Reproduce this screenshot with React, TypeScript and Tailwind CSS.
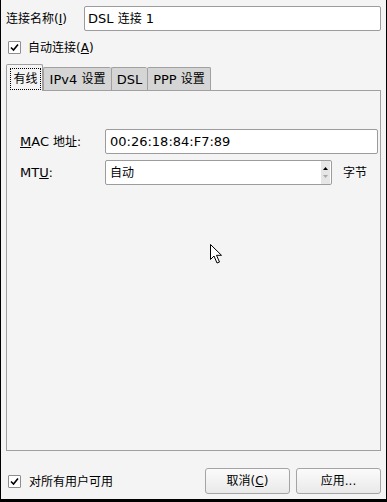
import React from 'react';

// CJK glyphs in the reference are narrower than the Latin em, so set them a touch smaller
const Z: React.FC<{ children: React.ReactNode }> = ({ children }) => (
  <span className="text-[12px]">{children}</span>
);

const Check: React.FC = () => (
  <div className="w-[13px] h-[13px] shrink-0 bg-white border border-[#8e8e8e] rounded-[1px] flex items-center justify-center">
    <svg width="9" height="9" viewBox="0 0 9 9">
      <path d="M1 4.5 L3.5 7 L8 1.5" fill="none" stroke="#000" strokeWidth="1.6" />
    </svg>
  </div>
);

const Tab: React.FC<{ label: React.ReactNode; w: string; last?: boolean }> = ({ label, w, last }) => (
  <div
    className={`${w} h-[23px] bg-[#d5d5d5] border-t border-l border-[#a0a0a0] ${last ? 'border-r' : ''} rounded-t-[2px] flex items-center justify-center whitespace-pre`}
  >
    {label}
  </div>
);

export default function App() {
  return (
    <div className="relative w-[387px] h-[502px] bg-[#f4f4f4] border-l border-r border-b-[3px] border-black flex flex-col text-[13px] leading-none text-black font-['DejaVu_Sans','Noto_Sans_CJK_SC',sans-serif]">
      {/* connection name */}
      <div className="flex items-center pt-[6px] pl-[5px] pr-[5px]">
        <div className="w-[78px] shrink-0">
          <Z>连接名称(<span className="underline">I</span>)</Z>
        </div>
        <div className="flex-1 h-[25px] bg-white border border-[#9c9c9c] rounded-[2px] flex items-center pl-[3px] whitespace-pre">
          DSL <Z>连接</Z> 1
        </div>
      </div>

      {/* auto connect */}
      <div className="flex items-center mt-[10px] pl-[7px] gap-[7px] h-[13px]">
        <Check />
        <Z>
          自动连接(<span className="underline">A</span>)
        </Z>
      </div>

      {/* tabs */}
      <div className="flex items-end mt-[10px] pl-[5px] h-[26px]">
        <div className="relative z-10 w-[37px] h-[27px] -mb-px bg-[#f4f4f4] border border-b-0 border-[#a0a0a0] rounded-t-[2px] pt-[3px] pl-[3px] pr-[1px]">
          <div className="h-[22px] border border-dotted border-black flex items-center justify-center">
            <Z>有线</Z>
          </div>
        </div>
        <Tab w="w-[68px]" label={<>IPv4 <Z>设置</Z></>} />
        <Tab w="w-[36px]" label="DSL" />
        <Tab w="w-[64px]" last label={<>PPP <Z>设置</Z></>} />
      </div>

      {/* panel */}
      <div className="mx-[5px] h-[361px] border border-[#a0a0a0] pt-[38px] pl-[13px] pr-[2px]">
        <div className="grid grid-cols-[85px_1fr_46px] gap-y-[6px] items-center">
          <div className="whitespace-pre">
            <span className="underline">M</span>AC <Z>地址:</Z>
          </div>
          <div className="col-span-2 h-[25px] bg-white border border-[#9c9c9c] rounded-[2px] flex items-center pl-[4px]">
            00:26:18:84:F7:89
          </div>

          <div>
            MT<span className="underline">U</span>
            <Z>:</Z>
          </div>
          <div className="h-[25px] bg-white border border-[#9c9c9c] rounded-[2px] flex items-center pl-[4px] pr-px">
            <div className="flex-1">
              <Z>自动</Z>
            </div>
            <div className="w-[9px] h-[23px] bg-[#e6e6e6] flex flex-col items-center justify-center gap-[5px]">
              <svg width="5" height="3" viewBox="0 0 5 3">
                <path d="M0 3 L2.5 0 L5 3 Z" fill="#000" />
              </svg>
              <svg width="5" height="3" viewBox="0 0 5 3">
                <path d="M0 0 L2.5 3 L5 0 Z" fill="#a8a8a8" />
              </svg>
            </div>
          </div>
          <div className="pl-[11px]">
            <Z>字节</Z>
          </div>
        </div>
      </div>

      {/* footer */}
      <div className="flex items-center mt-[17px] pl-[7px] pr-[5px]">
        <Check />
        <div className="ml-[8px] flex-1">
          <Z>对所有用户可用</Z>
        </div>
        <div className="flex gap-[6px]">
          <button className="w-[85px] h-[26px] rounded-[3px] border border-[#a4a4a4] bg-gradient-to-b from-[#fbfbfb] to-[#e9e9e9] flex items-center justify-center">
            <Z>
              取消(<span className="underline">C</span>)
            </Z>
          </button>
          <button className="w-[85px] h-[26px] rounded-[3px] border border-[#a4a4a4] bg-gradient-to-b from-[#fbfbfb] to-[#e9e9e9] flex items-center justify-center">
            <Z>应用...</Z>
          </button>
        </div>
      </div>

      {/* mouse pointer */}
      <svg className="absolute left-[209px] top-[244px]" width="13" height="21" viewBox="0 0 13 21">
        <path
          d="M0.5 0.5 L0.5 15.5 L4 12 L7 19 L9.5 18 L6.5 11.3 L11.5 11.3 Z"
          fill="#fff"
          stroke="#000"
          strokeWidth="1"
          strokeLinejoin="miter"
        />
      </svg>
    </div>
  );
}
